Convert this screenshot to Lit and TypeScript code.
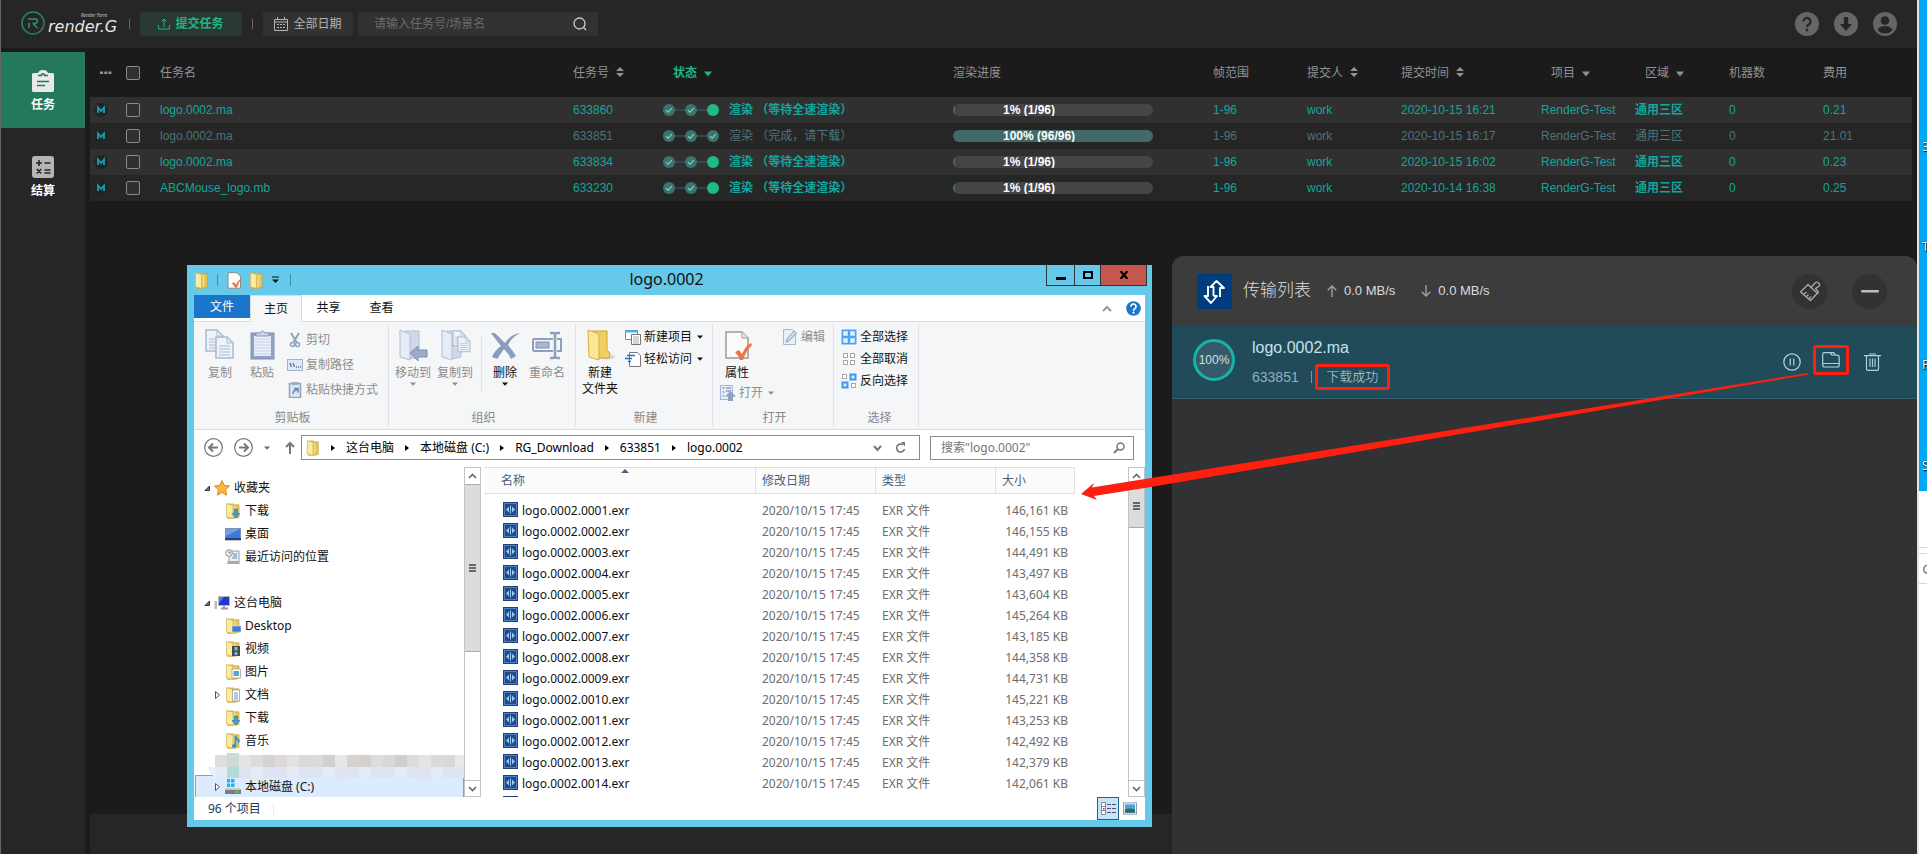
import { LitElement, html, svg, css, nothing, TemplateResult } from 'lit';
import { customElement } from 'lit/decorators.js';
import { classMap } from 'lit/directives/class-map.js';

/* ---------- shared glyphs ---------- */

const folder = (w: number, h: number, extra: unknown = nothing) => html`
  <svg width=${w} height=${h} viewBox="0 0 16 16" preserveAspectRatio="none" aria-hidden="true">
    <path d="M2.500 1h6l1 .8H14v12.600l-4.500.9H2.500z" fill="#e6c860" stroke="#c19d3c" stroke-width=".7" />
    <path d="M1.500.6 8 2.400v13L1.500 14z" fill="#fbeb9f" stroke="#d0b152" stroke-width=".7" />
    <path d="M10 3v11" stroke="#f6e08a" stroke-width="1.200" />
    ${extra}
  </svg>`;

const caret = (dir: 'down' | 'right' = 'down') => html`
  <svg class="caret" width="6" height="6" viewBox="0 0 6 6" aria-hidden="true">
    <path d=${dir === 'down' ? 'M0 1.5h6L3 4.8z' : 'M1 0v6l4-3z'} fill="currentColor" />
  </svg>`;

/* ---------- task manager ---------- */

interface Task {
  name: string; id: string; status: string; done: boolean;
  pct: number; frames: string; time: string; cost: string;
}

const TASKS: Task[] = [
  { name: 'logo.0002.ma', id: '633860', status: '渲染 （等待全速渲染）', done: false, pct: 1, frames: '1/96', time: '2020-10-15 16:21', cost: '0.21' },
  { name: 'logo.0002.ma', id: '633851', status: '渲染 （完成，请下载）', done: true, pct: 100, frames: '96/96', time: '2020-10-15 16:17', cost: '21.01' },
  { name: 'logo.0002.ma', id: '633834', status: '渲染 （等待全速渲染）', done: false, pct: 1, frames: '1/96', time: '2020-10-15 16:02', cost: '0.23' },
  { name: 'ABCMouse_logo.mb', id: '633230', status: '渲染 （等待全速渲染）', done: false, pct: 1, frames: '1/96', time: '2020-10-14 16:38', cost: '0.25' },
];

const sorter = html`<svg class="sort" width="8" height="10" viewBox="0 0 8 10" aria-hidden="true"><path d="M0 4h8L4 0zM0 6h8L4 10z" fill="currentColor" /></svg>`;
const filter = html`<svg class="sort" width="8" height="6" viewBox="0 0 8 6" aria-hidden="true"><path d="M0 .5h8L4 5.500z" fill="currentColor" /></svg>`;

@customElement('task-manager')
class TaskManager extends LitElement {
  static styles = css`
    :host { display: flex; flex-direction: column; background: #1b1b1b; color: #929292;
      font: 12px/16px "Liberation Sans", "Noto Sans CJK SC", sans-serif; border-left: 1px solid #666; }
    button { font: inherit; color: inherit; background: none; border: 0; padding: 0; margin: 0; cursor: pointer; }
    .top { display: flex; align-items: center; height: 48px; background: #262626; padding: 0 20px 0 15px; }
    .logo { display: block; }
    .rule { width: 1px; height: 10px; background: #666; }
    .rule.a { margin: 0 10px 0 9px; }
    .rule.b { margin: 0 10px; }
    .top .submit, .top .date { height: 24px; display: flex; align-items: center; justify-content: center; gap: 5px; border-radius: 2px; }
    .top .submit { width: 102px; background: #2a3833; color: #1fb588; font-weight: 700; }
    .top .date { width: 90px; background: #323232; color: #b4b4b4; }
    .search { margin-left: 5px; width: 240px; height: 24px; background: #323232; border-radius: 2px; display: flex; align-items: center; padding: 0 11px 0 16px; box-sizing: border-box; color: #ccc; }
    .search input { flex: 1; min-width: 0; background: none; border: 0; outline: 0; padding: 0; color: #ccc; font: inherit; }
    .search input::placeholder { color: #6b6b6b; opacity: 1; }
    .search svg { display: block; }
    .tools { margin-left: auto; display: flex; gap: 15px; }
    .tools svg, .side svg { display: block; }
    .body { flex: 1; display: flex; padding-top: 4px; gap: 5px; }
    .side { width: 84px; background: #262626; display: flex; flex-direction: column; gap: 10px; }
    .side a { height: 76px; display: flex; flex-direction: column; align-items: center; box-sizing: border-box; padding-top: 18px; gap: 5px; color: #fff; font-weight: 700; text-decoration: none; }
    .side a.on { background: #24795d; }
    .main { flex: 1; min-width: 0; display: flex; flex-direction: column; }
    .foot { margin-top: auto; height: 40px; background: #262626; }
    .wrap { padding-right: 5px; }
    table { width: 100%; table-layout: fixed; border-collapse: collapse; }
    th, td { box-sizing: border-box; padding: 0 0 0 10px; text-align: left; font-weight: 400; white-space: nowrap; }
    th { height: 45px; padding-bottom: 4px; }
    td { height: 26px; color: #10a79c; }
    tbody tr { background: #262626; }
    tbody tr:nth-child(odd) { background: #303030; }
    tr.done td { color: #4c7479; }
    th.in { padding-left: 20px; }
    th.on { color: #1fb588; font-weight: 700; }
    .sort { margin-left: 4px; }
    .i1 { width: 26px; }
    .i2 { width: 34px; }
    .id { width: 90px; }
    .st { width: 290px; }
    .pr { width: 260px; }
    .n { width: 94px; }
    .tm { width: 140px; }
    .last { width: 99px; }
    td.i1 { padding-left: 4px; }
    .m, .more { display: block; }
    input[type="checkbox"] { appearance: none; display: block; width: 14px; height: 14px; margin: 0; border: 1px solid #8a8a8a; border-radius: 2px; background: #303030; }
    .state { display: flex; align-items: center; gap: 10px; }
    .bar { display: grid; width: 200px; height: 12px; line-height: 12px; border-radius: 6px; background: #454545; overflow: hidden; color: #fff; font-weight: 700; }
    .bar > * { grid-area: 1 / 1; }
    .fill { background: #416a68; }
    .bar span { padding-left: 50px; }
    td b { font-weight: 700; }
    tr.done td b { font-weight: 400; }
  `;

  private steps(done: boolean) {
    const tick = (x: number) => svg`<circle cx=${x} cy="6" r="6" fill="#41716f" /><path d="M${x - 3} 6.200l2.200 2 3.600-4" fill="none" stroke="#5fe0bd" stroke-width="1.200" />`;
    return html`<svg width="56" height="12" viewBox="0 0 56 12" aria-hidden="true">
      <path d="M6 6h44" stroke="#35665f" />
      ${tick(6)}${tick(28)}${done ? tick(50) : svg`<circle cx="50" cy="6" r="6" fill="#1fb98a" />`}
    </svg>`;
  }

  render() {
    return html`
      <header class="top">
        <svg class="logo" width="104" height="30" viewBox="0 0 104 30" role="img" aria-label="render.G">
          <circle cx="17" cy="14" r="11" fill="none" stroke="#27806a" stroke-width="1.500" />
          <path d="M12 10h7.500q2 0 2 2t-2 2.500h-3M17 14.500l4.500 4.500M13 14v5" fill="none" stroke="#2a9478" stroke-width="1.600" />
          <text x="32" y="23" font-family="DejaVu Sans, sans-serif" font-size="16" font-style="italic" fill="#e4e4e4">render.G</text>
          <text x="65" y="8" font-family="Lato, sans-serif" font-size="5" font-style="italic" fill="#bbb">Render Farm</text>
        </svg>
        <span class="rule a"></span>
        <button class="submit">
          <svg width="12" height="12" viewBox="0 0 12 12" fill="none" stroke="currentColor" aria-hidden="true"><path d="M.5 7v4h11V7M6 9V1M3.500 3.500L6 1l2.500 2.500" /></svg>
          提交任务
        </button>
        <span class="rule b"></span>
        <button class="date">
          <svg width="14" height="14" viewBox="0 0 14 14" fill="none" stroke="currentColor" aria-hidden="true"><path d="M.5 2.500h13v11H.5zM.5 5h13M3.500 0v3M10.500 0v3" /><path d="M3 7.500h8M3 10.500h8" stroke-dasharray="2 1" /></svg>
          全部日期
        </button>
        <label class="search">
          <input type="search" placeholder="请输入任务号/场景名" aria-label="搜索任务" />
          <svg width="14" height="14" viewBox="0 0 14 14" fill="none" stroke="currentColor" stroke-width="1.300" aria-hidden="true"><circle cx="6.500" cy="6.500" r="5.500" /><path d="M10.300 10.300L13 13" /></svg>
        </label>
        <div class="tools">
          <button aria-label="帮助"><svg width="24" height="24" viewBox="0 0 24 24"><circle cx="12" cy="12" r="12" fill="#666" /><path d="M8.500 9.500a3.500 3.500 0 1 1 5.300 3q-1.800 1-1.800 2.500" fill="none" stroke="#262626" stroke-width="2.200" /><circle cx="12" cy="18" r="1.400" fill="#262626" /></svg></button>
          <button aria-label="下载"><svg width="24" height="24" viewBox="0 0 24 24"><circle cx="12" cy="12" r="12" fill="#666" /><path d="M9.800 5h4.400v7H18l-6 7-6-7h3.800z" fill="#262626" /></svg></button>
          <button aria-label="账户"><svg width="24" height="24" viewBox="0 0 24 24"><circle cx="12" cy="12" r="12" fill="#666" /><circle cx="12" cy="8.500" r="4.300" fill="#262626" /><path d="M4.500 18q2-4 7.500-4t7.500 4q-3 3.500-7.500 3.500T4.500 18" fill="#262626" /></svg></button>
        </div>
      </header>
      <div class="body">
        <nav class="side">
          <a class="on" href="#tasks">
            <svg width="22" height="22" viewBox="0 0 22 22"><path d="M1.500 3H6q1-3 5-3t5 3h4.500q1.500 0 1.500 1.500v16q0 1.500-1.500 1.500h-19Q0 22 0 20.500v-16Q0 3 1.500 3" fill="#e9e9e9" /><path d="M6 5.500h3.500v-1q1.500-1.500 3 0v1H16" fill="none" stroke="#24795d" stroke-width="1.500" /><path d="M5 11.500h12M5 15.500h8" stroke="#24795d" stroke-width="1.600" /></svg>
            任务
          </a>
          <a href="#billing">
            <svg width="22" height="22" viewBox="0 0 22 22"><rect width="22" height="22" rx="3" fill="#b5b5b5" /><path d="M4 7h6M7 4v6M12.500 7h6M4.800 13l4.400 4.400M9.200 13l-4.400 4.400M12.500 14h6M12.500 17h6" stroke="#262626" stroke-width="1.600" /></svg>
            结算
          </a>
        </nav>
        <main class="main">
          <div class="wrap">
            <table>
              <thead>
                <tr>
                  <th class="i1"><svg class="more" width="12" height="4" viewBox="0 0 12 4"><path d="M0 .5h3v2.500H0zM4.200.5h3v2.500h-3zM8.400.5h3v2.500h-3z" fill="#929292" /></svg></th>
                  <th class="i2"><input type="checkbox" aria-label="全选" /></th>
                  <th>任务名</th>
                  <th class="id">任务号 ${sorter}</th>
                  <th class="st in on">状态 ${filter}</th>
                  <th class="pr">渲染进度</th>
                  <th class="n">帧范围</th>
                  <th class="n">提交人 ${sorter}</th>
                  <th class="tm">提交时间 ${sorter}</th>
                  <th class="n in">项目 ${filter}</th>
                  <th class="n in">区域 ${filter}</th>
                  <th class="n">机器数</th>
                  <th class="last">费用</th>
                </tr>
              </thead>
              <tbody>
                ${TASKS.map((t) => html`
                  <tr class=${classMap({ done: t.done })}>
                    <td class="i1"><svg class="m" width="14" height="14" viewBox="0 0 14 14"><circle cx="7" cy="7" r="7" fill="#212424" /><path d="M4 10V4.500l3 3.500 3-3.500V10" fill="none" stroke="#1a9aa5" stroke-width="1.900" /></svg></td>
                    <td><input type="checkbox" aria-label=${t.id} /></td>
                    <td>${t.name}</td>
                    <td>${t.id}</td>
                    <td><div class="state">${this.steps(t.done)}<b>${t.status}</b></div></td>
                    <td><div class="bar"><div class="fill" style="width:${t.pct}%"></div><span>${t.pct}% (${t.frames})</span></div></td>
                    <td>1-96</td>
                    <td>work</td>
                    <td>${t.time}</td>
                    <td>RenderG-Test</td>
                    <td><b>通用三区</b></td>
                    <td>0</td>
                    <td>${t.cost}</td>
                  </tr>`)}
              </tbody>
            </table>
          </div>
          <div class="foot"></div>
        </main>
      </div>`;
  }
}

/* ---------- transfer panel ---------- */

@customElement('transfer-panel')
class TransferPanel extends LitElement {
  static styles = css`
    :host { display: flex; flex-direction: column; background: #313234; border-radius: 12px 12px 0 0; overflow: hidden;
      font: 13px/18px "Liberation Sans", "Noto Sans CJK SC", sans-serif; color: #dcdcdc; }
    svg { display: block; }
    button { font: inherit; color: inherit; background: none; border: 0; padding: 0; cursor: pointer; }
    header { height: 70px; display: flex; align-items: center; padding: 0 30px 0 25px; background: #3c3c3c; }
    h2 { margin: 0 16px 0 11px; font-size: 17px; line-height: 24px; font-weight: 300; }
    .speed { display: flex; align-items: center; gap: 7px; margin-right: 26px; }
    .round { width: 35px; height: 35px; border-radius: 50%; background: #323232; display: grid; place-items: center; margin-left: 25px; }
    .push { margin-left: auto; }
    .row { height: 73px; box-sizing: border-box; display: flex; align-items: center; padding: 0 36px 0 21px; background: #224b5a; color: #c3e3ea; border-bottom: 1px solid #35606d; }
    .ring { width: 42px; height: 42px; box-sizing: border-box; border: 3px solid #17b3a6; border-radius: 50%; background: #365a68; display: grid; place-items: center; font-size: 12px; margin: 0 17px 4px 0; }
    .info { display: flex; flex-direction: column; gap: 6px; flex: 1; padding-top: 4px; }
    .name { font-size: 16px; line-height: 20px; }
    .meta { display: flex; align-items: center; color: #8fb0ba; font-size: 14px; }
    .bar { width: 1px; height: 12px; background: #7898a2; margin: 0 3px 0 12px; }
    .mark { border: 3px solid #fd2010; border-radius: 3px; box-sizing: border-box; }
    .meta .mark { width: 75px; height: 26px; display: grid; place-items: center; font-size: 13px; font-weight: 300; color: #b4dbe4; }
    .acts { display: flex; align-items: center; }
    .open { width: 36px; height: 30px; display: grid; place-items: center; margin: 0 15px 4px 12px; }
  `;

  render() {
    return html`
      <header>
        <svg width="35" height="35" viewBox="0 0 35 35"><rect width="35" height="35" fill="#003d80" /><path d="M11 12v10H7.500l6.500 7 6-7h-3.500M16.500 22V13h-3l6-6 7.500 7h-4v9" fill="none" stroke="#fff" stroke-width="1.900" stroke-linejoin="round" /></svg>
        <h2>传输列表</h2>
        <span class="speed"><svg width="10" height="12" viewBox="0 0 10 12" fill="none" stroke="#a0a0a0" stroke-width="1.400"><path d="M5 12V1M.7 5.300L5 1l4.300 4.300" /></svg>0.0 MB/s</span>
        <span class="speed"><svg width="10" height="12" viewBox="0 0 10 12" fill="none" stroke="#a0a0a0" stroke-width="1.400"><path d="M5 0v11M.7 6.700L5 11l4.300-4.300" /></svg>0.0 MB/s</span>
        <button class="round push" aria-label="清理">
          <svg width="22" height="22" viewBox="0 0 22 22" fill="none" stroke="#a9a9a9" stroke-width="1.300" stroke-linejoin="round"><path d="M1.500 12L9 4.500l3 3 4.500-5q2-1 3.500 1t-.5 3l-3 2 3 3.500-8 8.500zM9 4.500L19 14M4.500 14.500l3-2.500M7 17l2.500-2.500M9.500 19L12 16.500" /></svg>
        </button>
        <button class="round" aria-label="最小化"><svg width="18" height="3" viewBox="0 0 18 3"><rect width="18" height="2.500" rx="1" fill="#bdbdbd" /></svg></button>
      </header>
      <div class="row">
        <div class="ring">100%</div>
        <div class="info">
          <div class="name">logo.0002.ma</div>
          <div class="meta">633851<i class="bar"></i><span class="mark">下载成功</span></div>
        </div>
        <div class="acts">
          <button aria-label="暂停"><svg width="18" height="18" viewBox="0 0 18 18" fill="none" stroke="#a5d3df" stroke-width="1.300"><circle cx="9" cy="9" r="8.200" /><path d="M7.200 5.500v7M10.800 5.500v7" /></svg></button>
          <button class="open mark" aria-label="打开文件夹"><svg width="18" height="16" viewBox="0 0 18 16" fill="none" stroke="#a5d3df" stroke-width="1.200" stroke-linejoin="round"><path d="M.7 13V2Q.7.700 2 .700h6L10 3l5.500.2q1.700.3 1.700 2V13q0 2-2 2H2.700q-2 0-2-2zM8 .700h4l1.500 2.500M.7 11.500h16.500" /></svg></button>
          <button aria-label="删除"><svg width="17" height="18" viewBox="0 0 17 18" fill="none" stroke="#a5d3df" stroke-width="1.200"><path d="M0 2.700h17M5 1h7M2.500 3v13q0 1.300 1.300 1.300h9.400q1.300 0 1.300-1.300V3M6 5.500v8.500M8.500 5.500v8.500M11 5.500v8.500" /></svg></button>
        </div>
      </div>`;
  }
}

/* ---------- file explorer ---------- */

const SIZES = ['146,161', '146,155', '144,491', '143,497', '143,604', '145,264', '143,185', '144,358', '144,731', '145,221', '143,253', '142,492', '142,379', '142,061', '142,020'];

const big = (body: TemplateResult) => html`<svg width="32" height="32" viewBox="0 0 32 32" aria-hidden="true">${body}</svg>`;
const small = (body: TemplateResult) => html`<svg width="16" height="16" viewBox="0 0 16 16" aria-hidden="true">${body}</svg>`;

const page = (x: number, y: number) => svg`<path d="M${x} ${y}h11l6 6v15h-17z" fill="#eef3fa" stroke="#a9b9d3" stroke-width="1.500" /><path d="M${x + 11} ${y}v6h6M${x + 3} ${y + 9}h11M${x + 3} ${y + 12}h11M${x + 3} ${y + 15}h11M${x + 3} ${y + 18}h11" fill="none" stroke="#a9b9d3" />`;
const greyFolder = svg`<path d="M8 2h14v26l-10 2z" fill="#cfd9e8" stroke="#b0bed6" /><path d="M3 1l10 4v26L3 28z" fill="#e6ecf5" stroke="#b0bed6" />`;

const BIG = {
  copy: big(svg`${page(2, 1)}${page(12, 8)}`),
  paste: big(svg`<rect x="5" y="4" width="23" height="26" fill="#8fa2c4" stroke="#7f93b7" /><path d="M8 7h17v20H8z" fill="#eaf0f9" /><path d="M8 10h17M8 13h17M8 16h17M8 19h17M8 22h17M8 25h17" stroke="#c3d0e4" /><path d="M10 4h4q2.500-4 5 0h4v3H10z" fill="#c9d3e3" stroke="#8b9bb6" />`),
  move: big(svg`${greyFolder}<path d="M13 24l8-7v4h9v7h-9v4z" fill="#9aacca" stroke="#7f93b7" />`),
  copyTo: big(svg`${greyFolder}<g transform="translate(14 2) scale(.7)">${page(0, 0)}</g><g transform="translate(19 8) scale(.7)">${page(0, 0)}</g>`),
  del: big(svg`<path d="M2 4q4-1 6 2 5 5 8 8 6-9 15-10-9 5-12 12 5 6 8 11l-5 3q-3-6-7-10-4 6-7 10l-5-2q3-7 9-11Q7 11 2 4" fill="#8b9dbf" />`),
  rename: big(svg`<path d="M2 10h20M2 22h20M2 10v12M26 10h4v12h-4" fill="none" stroke="#8fa0bf" stroke-width="2" /><rect x="5" y="13" width="13" height="6" fill="#a9b7d0" stroke="#7f90b2" /><path d="M19 4h3q2 0 2 2v20q0 3-2 3h-3M29 4h-3q-2 0-2 2M29 29h-3q-2 0-2-3" fill="none" stroke="#8fa0bf" stroke-width="2.500" />`),
  newFolder: big(svg`<ellipse cx="22" cy="28" rx="9" ry="2.500" fill="#d5d5d5" /><path d="M8 2h15v19l3 3-1 5H12z" fill="#f0cf62" stroke="#cfa534" /><path d="M4 1l11 4v26L5 28z" fill="#fbe796" stroke="#d6ae45" />`),
  props: big(svg`<path d="M5 3h16l6 6v20H5z" fill="#fbfbfb" stroke="#9b9b9b" stroke-width="1.500" /><path d="M21 3v6h6" fill="#e8e8e8" stroke="#9b9b9b" /><path d="M14 23l4-2 3 4q4-9 9-11l1 2q-6 6-9 15h-3q-2-5-5-8" fill="#ee7845" />`),
};

const cell = (x: number, y: number, on: boolean, s = 5) => svg`<rect x=${x} y=${y} width=${s} height=${s} fill=${on ? '#d8ecff' : '#fff'} stroke=${on ? '#3c97ee' : '#a6a6a6'} stroke-width=${on ? 2 : 1} />`;
const pane = (x: number, y: number) => svg`<rect x=${x} y=${y} width="4" height="4" fill="#e2f2ff" stroke="#b9dcfb" />`;

const SMALL = {
  cut: small(svg`<path d="M4 1l5.500 9M12 1L6.500 10" stroke="#8fa3c2" stroke-width="2" /><circle cx="5.500" cy="12.500" r="2" fill="none" stroke="#8fa3c2" stroke-width="1.500" /><circle cx="10.500" cy="12.500" r="2" fill="none" stroke="#8fa3c2" stroke-width="1.500" />`),
  path: small(svg`<rect x=".5" y="2.500" width="15" height="11" fill="#dfe8f5" stroke="#a3b2ca" /><path d="M3 6l1.500 4M6 6l1.500 4M9 10h1M11 10h1M13 10h1" stroke="#5d7396" stroke-width="1.300" />`),
  shortcut: small(svg`<rect x="2.500" y="1.500" width="11" height="14" fill="#dce5f3" stroke="#8fa3c2" stroke-width="1.500" /><path d="M5 0h6v3H5z" fill="#9aacca" /><path d="M6 12q0-4 4-4M7 6.500h4v4" fill="none" stroke="#6d83a8" stroke-width="1.500" />`),
  newItem: small(svg`<path d="M.5 1.500h12v9H.5z" fill="#fff" stroke="#3f9ad8" /><path d="M.5 1.500h12v2H.5z" fill="#58aee6" /><path d="M6.500 5.500h9v10h-9z" fill="#fff" stroke="#777" /><path d="M8 8h6M8 10h6M8 12h6M8 14h6" stroke="#aaa" />`),
  easy: small(svg`<path d="M4.500 1.500h8l3 3v11h-11z" fill="#fff" stroke="#777" /><path d="M2 4.500h8M0 7.500h7M3 10.500h3" stroke="#1f74c9" stroke-width="1.500" />`),
  edit: small(svg`<path d="M1.500.5h9l3 3v12h-12z" fill="#e8eef7" stroke="#a9b7cf" /><path d="M4 13l1-3 7-8 2.500 2L7 12z" fill="#cfdaea" stroke="#8ba0c2" />`),
  open: small(svg`<rect x=".5" y=".5" width="12" height="14" fill="#e8eef7" stroke="#a9b7cf" /><path d="M2.500 3h2M2.500 7h2M2.500 11h2M6 3h5M6 6h5" stroke="#8ba0c2" stroke-width="1.500" /><path d="M10.500 6l5.500 5.500h-3V16H8v-4.500H5z" fill="#8ba0c2" />`),
  all: small(svg`<rect width="15" height="15" x=".5" y=".5" fill="#4ba3f5" />${pane(2.5, 2.5)}${pane(9.5, 2.5)}${pane(2.5, 9.5)}${pane(9.5, 9.5)}`),
  none: small(svg`${cell(2.5, 2.5, false, 4)}${cell(9.5, 2.5, false, 4)}${cell(2.5, 9.5, false, 4)}${cell(9.5, 9.5, false, 4)}`),
  invert: small(svg`${cell(1.5, 1.5, false, 4)}${cell(9.5, 1.5, true, 5)}${cell(1.5, 9.5, true, 5)}${cell(10.5, 10.5, false, 4)}`),
};

const TREE_ICONS: Record<string, TemplateResult> = {
  star: small(svg`<path d="M8 .5l2.300 5 5.200.5-4 3.700 1.200 5.500L8 12.400l-4.700 2.800 1.200-5.500L.5 6l5.200-.5z" fill="#fdb932" stroke="#d9822b" />`),
  down: folder(16, 16, svg`<path d="M9.500 6h3v4.500h2.300L11 15 7.200 10.500h2.300z" fill="#3aa0e0" stroke="#1c6fae" stroke-width=".6" />`),
  desk: small(svg`<rect x=".5" y="2.500" width="15" height="11.500" fill="#3f7ad6" stroke="#8090a8" /><path d="M1 3h14L1 10z" fill="#6da0ea" /><path d="M0 13h16" stroke="#27426f" stroke-width="2" />`),
  recent: small(svg`<path d="M4 2h10v11H4z" fill="#eceff3" stroke="#9a9a9a" /><circle cx="4" cy="4" r="3.300" fill="#f6f6f6" stroke="#8f8f8f" /><path d="M4 2v2h2" stroke="#777" fill="none" /><path d="M8 5h4M8 7h4M7 9h5" stroke="#5a8cbf" /><path d="M3 12h11l1 3H2z" fill="#a9a9a9" />`),
  pc: small(svg`<rect x="4.500" y="1.500" width="11" height="9" fill="#2437c9" stroke="#b5b5b5" /><path d="M5 2h5L5 8z" fill="#5a7be8" /><path d="M7 13.500h7M10 11v2" stroke="#999" stroke-width="2" /><rect x=".5" y="6" width="2.500" height="8" fill="#b4bfb4" />`),
  fdesk: folder(16, 16, svg`<rect x="7" y="8" width="9" height="6" fill="#3f7ad6" stroke="#dde" stroke-width=".6" />`),
  video: folder(16, 16, svg`<rect x="7" y="5" width="8" height="10" fill="#4a4a4a" /><path d="M9.500 6h3v3.500h-3zM9.500 11h3v3h-3z" fill="#7fb4e0" />`),
  pic: folder(16, 16, svg`<rect x="7" y="5" width="8.500" height="9" fill="#fff" stroke="#999" stroke-width=".7" /><rect x="8.500" y="7" width="5.500" height="5" fill="#58a9c9" />`),
  doc: folder(16, 16, svg`<rect x="7.500" y="3" width="7" height="11" fill="#fff" stroke="#999" stroke-width=".7" /><path d="M9 6h4M9 8h4M9 10h4M9 12h4" stroke="#6f96c9" />`),
  music: folder(16, 16, svg`<path d="M10.500 13V3q.5 3 3.500 4.500-1 2-1 2" fill="none" stroke="#2c8fd8" stroke-width="1.700" /><ellipse cx="9" cy="13" rx="2.200" ry="1.700" fill="#2c8fd8" />`),
  disk: small(svg`<path d="M2 0h3v3.500H2zM6 0h3.500v3.500H6zM2 4.500h3V8H2zM6 4.500h3.500V8H6z" fill="#13b6ee" /><path d="M2 9h12l2 2v4H0v-4z" fill="#7d7d7d" /><path d="M2 9h12l2 2H0z" fill="#c9c9c9" /><path d="M10 13h4" stroke="#4ee03a" stroke-width="1.500" />`),
};

const TREE: Array<[number, string, string, string] | null> = [
  [1, 'open', 'star', '收藏夹'], [2, '', 'down', '下载'], [2, '', 'desk', '桌面'], [2, '', 'recent', '最近访问的位置'], null,
  [1, 'open', 'pc', '这台电脑'], [2, '', 'fdesk', 'Desktop'], [2, '', 'video', '视频'], [2, '', 'pic', '图片'],
  [2, 'shut', 'doc', '文档'], [2, '', 'down', '下载'], [2, '', 'music', '音乐'], null, [2, 'shut', 'disk', '本地磁盘 (C:)'],
];

const MOSAIC = ['#dedcdc', '#cddbd4', '#e3e3e3', '#dcdcda', '#d4d3d2', '#dcd9d8', '#e2e2e2', '#d9d9d9', '#dbdbdb', '#d0d0d0', '#e6e7ea', '#d5d2cf', '#d2d1d0', '#dedddd', '#d9d8d8', '#cfcfcf', '#dcdcdc', '#e4e4e4', '#dbdad9', '#d8d8d8', '#e9e9e9'];

@customElement('file-explorer')
class FileExplorer extends LitElement {
  static styles = css`
    :host { display: flex; flex-direction: column; box-sizing: border-box; background: #66c9ea; padding: 0 7px 7px; color: #111;
      font: 12px/16px "Noto Sans", "Noto Sans CJK SC", sans-serif; }
    svg { display: block; flex: none; }
    button { font: inherit; color: inherit; background: none; border: 0; padding: 0; margin: 0; cursor: pointer; }
    .title { height: 30px; display: grid; grid-template-columns: 1fr auto 1fr; align-items: center; }
    .title h1 { margin: 0 6px 2px 0; font-size: 16px; line-height: 24px; font-weight: 400; }
    .quick { display: flex; align-items: center; }
    .vr { width: 1px; height: 12px; background: #3f90ac; margin: 0 9px 0 8px; }
    .quick .gap { margin-right: 6px; }
    .quick .custom { margin-right: -4px; }
    .win { justify-self: end; align-self: start; display: flex; margin-right: -2px; border: 1px solid #333; border-top: 0; }
    .win button { height: 20px; display: grid; place-items: center; border-left: 1px solid #333; }
    .win button:first-child { border-left: 0; width: 27px; }
    .win button:nth-child(2) { width: 26px; }
    .win .x { width: 46px; background: #c5584e; }
    .client { flex: 1; min-height: 0; display: flex; flex-direction: column; background: #fff; }
    .tabs { display: flex; height: 26px; border-bottom: 1px solid #dadbdc; align-items: center; }
    .tabs button { height: 26px; width: 53px; }
    .tabs .file { width: 56px; height: 23px; align-self: start; background: #1976ca; color: #fff; }
    .tabs .on { width: 52px; height: 27px; align-self: start; background: #f5f6f7; border: 1px solid #dadbdc; border-bottom: 0; }
    .tabs .end { margin-left: auto; display: flex; gap: 14px; align-items: center; padding-right: 4px; }
    .ribbon { display: flex; height: 107px; background: #f5f6f7; border-bottom: 1px solid #dadbdc; }
    .group { display: flex; flex-direction: column; justify-content: space-between; box-sizing: border-box; margin: 2px 0 3px; padding: 2px 0 0 3px; border-right: 1px solid #dfe1e4; }
    .group > div { display: flex; }
    .group > small { font-size: 12px; line-height: 16px; color: #888; text-align: center; }
    .g1 { width: 195px; }
    .g2 { width: 187px; }
    .g3 { width: 137px; }
    .g4 { width: 121px; }
    .g5 { width: 85px; padding-left: 7px; }
    .g1 > div { padding-left: 2px; }
    .big { width: 42px; padding-top: 3px; display: flex; flex-direction: column; align-items: center; line-height: 16px; }
    .big span { margin-top: 4px; white-space: nowrap; }
    .off { color: #8d8d8d; }
    .stack { display: flex; flex-direction: column; margin-left: 4px; }
    .g5 .stack { margin-left: 0; }
    .stack button, .sm { height: 22px; display: flex; align-items: center; gap: 3px; white-space: nowrap; }
    .g1 .stack { padding-top: 1px; }
    .g1 .stack button { height: 25px; }
    .sm .caret, .stack .caret { margin-left: 2px; }
    .two { width: 66px; }
    .two .sm { padding-left: 4px; }
    .two .big { height: 56px; }
    .sep { width: 1px; height: 55px; background: #dfe1e4; margin: 11px 2px 0 5px; }
    .address { display: flex; align-items: center; height: 35px; padding: 0 11px 2px 10px; color: #666; }
    .address .back { margin-right: 11px; }
    .address .fwd { margin-right: 11px; }
    .address .hist { margin-right: 15px; }
    .crumbs { flex: 1; height: 25px; box-sizing: border-box; border: 1px solid #888; display: flex; align-items: center; padding: 0 12px 0 4px; margin: 0 10px 0 6px; color: #000; }
    .crumbs .caret { margin: 0 10px; }
    .crumbs .tail { margin-left: auto; display: flex; gap: 13px; padding-right: 1px; }
    .find { width: 204px; height: 24px; box-sizing: border-box; border: 1px solid #888; display: flex; align-items: center; padding: 0 8px 0 10px; }
    .find input { flex: 1; min-width: 0; border: 0; outline: 0; padding: 0; font: inherit; background: none; }
    .find input::placeholder { color: #757575; opacity: 1; }
    .split { flex: 1; min-height: 0; display: flex; }
    .tree { position: relative; width: 270px; overflow: hidden; padding-top: 9px; box-sizing: border-box; }
    .tree a { height: 23px; box-sizing: border-box; display: flex; align-items: center; gap: 4px; padding-left: 10px; color: #111; text-decoration: none; }
    .tree a.l2 { padding-left: 21px; }
    .tree a.sel { margin-left: 1px; padding-left: 19px; background: #dcebfd; border: 1px solid #7da2ce; }
    .tree .blank { height: 23px; }
    .tree .ex { width: 6px; }
    .mosaic { position: absolute; left: 14px; top: 285px; }
    .scroll { width: 17px; box-sizing: border-box; border: 1px solid #c3c3c3; display: flex; flex-direction: column; background: #fff; }
    .scroll button { height: 16px; display: grid; place-items: center; }
    .thumb { background: #dcdcdc; border-block: 1px solid #ababab; display: grid; place-items: center; box-sizing: border-box; }
    .t1 { height: 168px; }
    .t2 { height: 44px; }
    .scroll .dn { margin-top: auto; border-top: 1px solid #c3c3c3; }
    .list { flex: 1; min-width: 0; overflow: hidden; margin-left: 3px; }
    table { table-layout: fixed; width: 591px; border-collapse: separate; border-spacing: 0; }
    th { height: 25px; padding: 0 6px; text-align: left; font-weight: 400; color: #4c607a; background: #fcfcfc; border: solid #e0e0e0; border-width: 1px 1px 1px 0; position: relative; }
    th svg { position: absolute; right: 126px; top: 1px; }
    th:first-child, td:first-child { padding-left: 17px; width: 248px; }
    th:nth-child(2), th:nth-child(3) { width: 107px; }
    tbody::before { content: ""; display: block; height: 6px; }
    td { height: 21px; padding: 0 7px 0 6px; color: #6d6d6d; white-space: nowrap; }
    td:first-child { color: #111; }
    td:last-child { text-align: right; }
    .fn { display: flex; align-items: center; gap: 4px; padding-left: 2px; }
    .fn svg { margin-bottom: 2px; }
    .status { height: 23px; display: flex; align-items: center; padding: 0 8px 0 14px; color: #1e395b; }
    .status .line { width: 1px; height: 12px; background: #ececec; margin-left: 12px; }
    .views { margin-left: auto; display: flex; align-items: center; gap: 4px; }
    .views .on { width: 22px; height: 23px; box-sizing: border-box; border: 1px solid #26628f; background: #c3e4f9; display: grid; place-items: center; }
  `;

  private bigBtn(icon: TemplateResult, label: string | TemplateResult, off = true, drop = false) {
    return html`<button class=${classMap({ big: true, off })}>${icon}<span>${label}</span>${drop ? caret() : nothing}</button>`;
  }

  private smallBtn(icon: TemplateResult, label: string, off = false, drop = false) {
    return html`<button class=${classMap({ sm: true, off })}>${icon}${label}${drop ? caret() : nothing}</button>`;
  }

  private scroll(thumb: string) {
    return html`<div class="scroll">
      <button aria-label="向上"><svg width="9" height="6" viewBox="0 0 9 6"><path d="M1 5l3.500-3.500L8 5" fill="none" stroke="#666" stroke-width="1.600" /></svg></button>
      <div class="thumb ${thumb}"><svg width="7" height="8" viewBox="0 0 7 8"><path d="M0 1h7M0 4h7M0 7h7" stroke="#666" stroke-width="2" /></svg></div>
      <button class="dn" aria-label="向下"><svg width="9" height="6" viewBox="0 0 9 6"><path d="M1 1l3.500 3.500L8 1" fill="none" stroke="#666" stroke-width="1.600" /></svg></button>
    </div>`;
  }

  private treeRow(row: [number, string, string, string] | null) {
    if (!row) return html`<div class="blank"></div>`;
    const [level, state, icon, label] = row;
    const mark = state === 'open' ? svg`<path d="M5.500 2v4.500H1z" fill="#777" stroke="#333" />`
      : state === 'shut' ? svg`<path d="M.5.5v7l4-3.500z" fill="#fff" stroke="#555" />` : nothing;
    return html`<a href="#" class=${classMap({ l2: level === 2, sel: icon === 'disk' })}>
      <svg class="ex" width="6" height="8" viewBox="0 0 6 8">${mark}</svg>${TREE_ICONS[icon]}<span>${label}</span></a>`;
  }

  render() {
    const circleArrow = (d: string) => html`<svg width="19" height="19" viewBox="0 0 19 19" fill="none" stroke="#777"><circle cx="9.500" cy="9.500" r="8.800" stroke-width="1.200" /><path d=${d} stroke-width="2" /></svg>`;
    const tick = html`<svg width="16" height="17" viewBox="0 0 16 17"><path d="M1 .7h9l3.500 3.500v12H1z" fill="#fbfbfb" stroke="#8a8a8a" /><path d="M5 11l2.500-.5L9 13q2-5 6-7-3.500 4-5 9.500H8z" fill="#ee6c3b" /></svg>`;
    return html`
      <div class="title">
        <div class="quick">
          ${folder(15, 17)}<i class="vr"></i><span class="gap">${tick}</span>${folder(15, 17)}
          <svg class="custom" width="22" height="8" viewBox="0 0 22 8"><path d="M8 1h7" stroke="#111" /><path d="M8 3.500h7L11.500 7z" fill="#111" /></svg><i class="vr"></i>
        </div>
        <h1>logo.0002</h1>
        <div class="win">
          <button aria-label="最小化"><svg width="10" height="10" viewBox="0 0 10 10"><path d="M0 7h10v3H0z" /></svg></button>
          <button aria-label="最大化"><svg width="10" height="8" viewBox="0 0 10 8"><path d="M1 1h8v6H1z" fill="none" stroke="#000" stroke-width="2" /></svg></button>
          <button class="x" aria-label="关闭"><svg width="10" height="8" viewBox="0 0 10 8"><path d="M1.500 0L8.500 8M8.500 0L1.500 8" stroke="#000" stroke-width="2.200" /></svg></button>
        </div>
      </div>
      <div class="client">
        <div class="tabs">
          <button class="file">文件</button><button class="on">主页</button><button>共享</button><button>查看</button>
          <div class="end">
            <svg width="10" height="7" viewBox="0 0 10 7"><path d="M1 6l4-4 4 4" fill="none" stroke="#999" stroke-width="2" /></svg>
            <svg width="15" height="15" viewBox="0 0 15 15"><circle cx="7.500" cy="7.500" r="7.300" fill="#1976ca" /><path d="M5 5.700a2.500 2.500 0 1 1 3.700 2q-1.200.7-1.200 2" fill="none" stroke="#fff" stroke-width="1.600" /><circle cx="7.500" cy="11.700" r="1.100" fill="#fff" /></svg>
          </div>
        </div>
        <div class="ribbon">
          <section class="group g1"><div>
            ${this.bigBtn(BIG.copy, '复制')}${this.bigBtn(BIG.paste, '粘贴')}
            <div class="stack">${this.smallBtn(SMALL.cut, '剪切', true)}${this.smallBtn(SMALL.path, '复制路径', true)}${this.smallBtn(SMALL.shortcut, '粘贴快捷方式', true)}</div>
          </div><small>剪贴板</small></section>
          <section class="group g2"><div>
            ${this.bigBtn(BIG.move, '移动到', true, true)}${this.bigBtn(BIG.copyTo, '复制到', true, true)}<i class="sep"></i>
            ${this.bigBtn(BIG.del, '删除', false, true)}${this.bigBtn(BIG.rename, '重命名')}
          </div><small>组织</small></section>
          <section class="group g3"><div>
            ${this.bigBtn(BIG.newFolder, html`新建<br />文件夹`, false)}
            <div class="stack">${this.smallBtn(SMALL.newItem, '新建项目', false, true)}${this.smallBtn(SMALL.easy, '轻松访问', false, true)}</div>
          </div><small>新建</small></section>
          <section class="group g4"><div>
            <div class="two">${this.bigBtn(BIG.props, '属性', false)}${this.smallBtn(SMALL.open, '打开', true, true)}</div>
            ${this.smallBtn(SMALL.edit, '编辑', true)}
          </div><small>打开</small></section>
          <section class="group g5"><div>
            <div class="stack">${this.smallBtn(SMALL.all, '全部选择')}${this.smallBtn(SMALL.none, '全部取消')}${this.smallBtn(SMALL.invert, '反向选择')}</div>
          </div><small>选择</small></section>
        </div>
        <div class="address">
          <button class="back" aria-label="后退">${circleArrow('M14 9.500H5.500M9 5.500l-4 4 4 4')}</button>
          <button class="fwd" aria-label="前进">${circleArrow('M5 9.500h8.500M10 5.500l4 4-4 4')}</button>
          <button class="hist" aria-label="历史">${caret()}</button>
          <button aria-label="上移"><svg width="10" height="13" viewBox="0 0 10 13"><path d="M5 13V2M1 6l4-4 4 4" fill="none" stroke="#777" stroke-width="2" /></svg></button>
          <div class="crumbs">
            ${folder(14, 16)}
            ${['这台电脑', '本地磁盘 (C:)', 'RG_Download', '633851', 'logo.0002'].map((c) => html`${caret('right')}<span>${c}</span>`)}
            <span class="tail">
              <svg width="9" height="12" viewBox="0 0 9 12"><path d="M1 4l3.500 4L8 4" fill="none" stroke="#777" stroke-width="2" /></svg>
              <svg width="11" height="12" viewBox="0 0 11 12"><path d="M8 2.800A4 4 0 1 0 9.500 7" fill="none" stroke="#777" stroke-width="1.600" /><path d="M6 0h4v4.500z" fill="#777" /></svg>
            </span>
          </div>
          <label class="find"><input type="text" aria-label="搜索" placeholder='搜索"logo.0002"' /><svg width="12" height="12" viewBox="0 0 12 12"><circle cx="7.500" cy="4.500" r="3.500" fill="none" stroke="#777" stroke-width="1.500" /><path d="M5 7L1 11" stroke="#777" stroke-width="2" /></svg></label>
        </div>
        <div class="split">
          <nav class="tree">
            ${TREE.map((r) => this.treeRow(r))}
            <svg class="mosaic" width="256" height="28" viewBox="0 0 256 28" aria-hidden="true">
              ${MOSAIC.map((c, i) => svg`<rect x=${7 + i * 12} y="3" width="12" height="12" fill=${c} /><rect x=${7 + i * 12} y="15" width="12" height=${i % 7 === 3 ? 13 : 11} fill=${i % 3 ? '#dee5f0' : '#e5ebf5'} />`)}
              <path d="M0 15h8v11q-6-3-8-11" fill="#e8eff9" /><rect x="19" y="1" width="12" height="14" fill="#cddbd4" /><rect x="19" y="15" width="12" height="11" fill="#b2dcd7" />
            </svg>
          </nav>
          ${this.scroll('t1')}
          <div class="list">
            <table>
              <thead><tr><th>名称<svg width="8" height="4" viewBox="0 0 8 4"><path d="M0 4l4-4 4 4z" fill="#4c607a" /></svg></th><th>修改日期</th><th>类型</th><th>大小</th></tr></thead>
              <tbody>
                ${SIZES.map((s, i) => html`<tr>
                  <td><div class="fn"><svg width="15" height="15" viewBox="0 0 15 15"><rect width="15" height="15" fill="#243f75" /><rect x="1.500" y="1.500" width="12" height="12" fill="#244a86" stroke="#4c82cc" /><path d="M6 4.500v6L3 7.500zM9 4.500v6l3-3z" fill="#9cc8f5" /><path d="M7.500 3.500v8" stroke="#9cc8f5" /></svg>logo.0002.${String(i + 1).padStart(4, '0')}.exr</div></td>
                  <td>2020/10/15 17:45</td><td>EXR 文件</td><td>${s} KB</td>
                </tr>`)}
              </tbody>
            </table>
          </div>
          ${this.scroll('t2')}
        </div>
        <footer class="status">96 个项目<i class="line"></i>
          <div class="views">
            <button class="on" aria-label="详细信息"><svg width="15" height="13" viewBox="0 0 15 13"><path d="M.5.5h4v12h-4zM.5 4.500h4M.5 8.500h4" fill="#fff" stroke="#888" /><path d="M6 2.500h9M6 6.500h9M6 10.500h9" stroke="#556" stroke-dasharray="4 1" /><path d="M2 6h1.500v1.500H2z" fill="#d22" /></svg></button>
            <button aria-label="缩略图"><svg width="14" height="13" viewBox="0 0 15 13"><rect x=".5" y=".5" width="14" height="12" fill="#fff" stroke="#8a93a8" /><rect x="2" y="2" width="11" height="9" fill="#4fa3d9" /><path d="M2 8q5-3 11 0v3H2z" fill="#2d6b5b" /></svg></button>
          </div>
        </footer>
      </div>`;
  }
}

/* ---------- page ---------- */

@customElement('app-root')
class AppRoot extends LitElement {
  static styles = css`
    :host { display: flex; min-height: 100vh; position: relative; overflow: hidden; }
    .screen { flex: 1; min-width: 0; display: flex; position: relative; }
    task-manager { flex: 1; min-width: 0; }
    file-explorer { position: absolute; left: 187px; top: 265px; width: 965px; height: 562px; }
    transfer-panel { position: absolute; right: 0; top: 256px; bottom: 0; width: 745px; }
    .arrow { position: absolute; right: 108px; top: 372px; }
    .desktop { width: 8px; overflow: hidden; border-left: 2px solid #e4e4e4; background: #fff; color: #fff;
      font: 12px/20px "Noto Sans", sans-serif; text-shadow: 1px 1px 1px #000, 0 0 1px #000; }
    .icons { margin: 0; list-style: none; background: #00a8f6; height: 491px; box-sizing: border-box; padding: 137px 0 0 3px; display: grid; grid-template-rows: 100px 118px 101px 20px; align-content: start; }
    .edge { margin-top: 56px; height: 5px; border-block: 1px solid #d9d9d9; }
    .reload { height: 29px; border-bottom: 1px solid #d9d9d9; display: flex; align-items: center; padding-left: 3px; }
    .reload svg { flex: none; }
  `;

  render() {
    return html`
      <div class="screen">
        <task-manager></task-manager>
        <file-explorer></file-explorer>
        <transfer-panel></transfer-panel>
        <svg class="arrow" width="728" height="130" viewBox="0 0 728 130" aria-hidden="true">
          <path d="M0 122L13 111L11 115.500L70 106L727 1L727.500 2.500L70 115L13 124L16 128z" fill="#fd2010" />
        </svg>
      </div>
      <aside class="desktop">
        <ul class="icons"><li>3</li><li>T</li><li>P</li><li>S</li></ul>
        <div class="edge"></div>
        <div class="reload"><svg width="11" height="12" viewBox="0 0 11 12"><path d="M9 4A4 4 0 1 0 9.500 7.500M9.500 1v3.500H6" fill="none" stroke="#888" stroke-width="1.600" /></svg></div>
      </aside>`;
  }
}
